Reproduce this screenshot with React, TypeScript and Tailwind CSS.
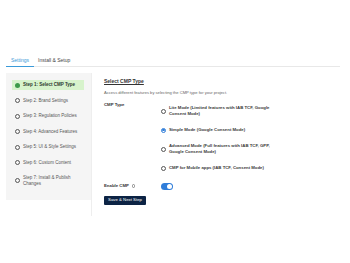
import React from "react";

const steps = [
  "Step 1: Select CMP Type",
  "Step 2: Brand Settings",
  "Step 3: Regulation Policies",
  "Step 4: Advanced Features",
  "Step 5: UI & Style Settings",
  "Step 6: Custom Content",
  "Step 7: Install & Publish Changes",
];

const options = [
  { label: "Lite Mode (Limited features with IAB TCF, Google Consent Mode)", checked: false },
  { label: "Simple Mode (Google Consent Mode)", checked: true },
  { label: "Advanced Mode (Full features with IAB TCF, GPP, Google Consent Mode)", checked: false },
  { label: "CMP for Mobile apps (IAB TCF, Consent Mode)", checked: false },
];

export default function App() {
  return (
    <div
      className="w-[350px] h-[263px] bg-white overflow-hidden"
      style={{ fontFamily: '"Liberation Sans", Arial, sans-serif' }}
    >
      <div className="pt-[57px] px-[6px]">
        <div className="flex border-b border-[#e8e8e8] text-[5px] leading-[7px] mr-[4px]">
          <div className="px-[5px] pb-[2px] text-[#3a9ad9] border-b border-[#3a9ad9] -mb-px">Settings</div>
          <div className="px-[5px] pb-[2px] text-[#444] ml-[-1px]">Install &amp; Setup</div>
        </div>
        <div className="flex mt-[6px]">
          <div className="w-[85px] h-[127px] bg-[#f5f5f5] pt-[7px] pl-[6px] pr-[7px] flex flex-col gap-[5.6px]">
            {steps.map((s, i) => (
              <div
                key={s}
                className={`flex items-center gap-[3px] pl-[3px] pr-[2px] min-h-[10px] py-[1px] ${
                  i === 0 ? "bg-[#d7f3cc]" : ""
                }`}
              >
                <span
                  className={`w-[5px] h-[5px] rounded-full shrink-0 ${
                    i === 0 ? "bg-[#3d9a4a]" : "border-[0.7px] border-[#555]"
                  }`}
                />
                <span
                  className={`text-[4.5px] leading-[6px] ${
                    i === 0 ? "text-[#2c3a2c] font-bold" : "text-[#555]"
                  }`}
                >
                  {s}
                </span>
              </div>
            ))}
          </div>
          <div className="border-l border-[#eee] h-[143px] pl-[12px] pt-[5px] flex-1">
            <div className="text-[5px] leading-[7px] font-bold text-[#333] underline">Select CMP Type</div>
            <div className="text-[4.1px] leading-[6px] text-[#666] mt-[5px]">
              Access different features by selecting the CMP type for your project.
            </div>
            <div className="flex mt-[6px]">
              <div className="w-[57px] text-[4.3px] leading-[6px] font-bold text-[#333]">CMP Type</div>
              <div className="flex flex-col gap-[10px] pt-[3px]">
                {options.map((o) => (
                  <div key={o.label} className="flex items-center gap-[3px] w-[116px]">
                    <span
                      className={`w-[5px] h-[5px] rounded-full shrink-0 flex items-center justify-center ${
                        o.checked ? "border-[0.7px] border-[#2f7dd9]" : "border-[0.7px] border-[#555]"
                      }`}
                    >
                      {o.checked && <span className="w-[2.6px] h-[2.6px] rounded-full bg-[#2f7dd9]" />}
                    </span>
                    <span className="text-[4.3px] leading-[6px] font-bold text-[#3a3a3a]">{o.label}</span>
                  </div>
                ))}
              </div>
            </div>
            <div className="flex items-center mt-[11.5px]">
              <div className="w-[57px] flex items-center gap-[3px] text-[4.3px] leading-[6px] font-bold text-[#333]">
                Enable CMP
                <span className="w-[3.5px] h-[3.5px] rounded-full border-[0.5px] border-[#888]" />
              </div>
              <div className="w-[12px] h-[7px] rounded-full bg-[#2f7dd9] flex items-center justify-end pr-[1px]">
                <span className="w-[5px] h-[5px] rounded-full bg-white" />
              </div>
            </div>
            <button className="mt-[6px] w-[42px] h-[9.5px] bg-[#0c2344] text-white text-[4.3px] leading-[6px] rounded-[1px] flex items-center justify-center">
              Save &amp; Next Step
            </button>
          </div>
        </div>
      </div>
    </div>
  );
}
